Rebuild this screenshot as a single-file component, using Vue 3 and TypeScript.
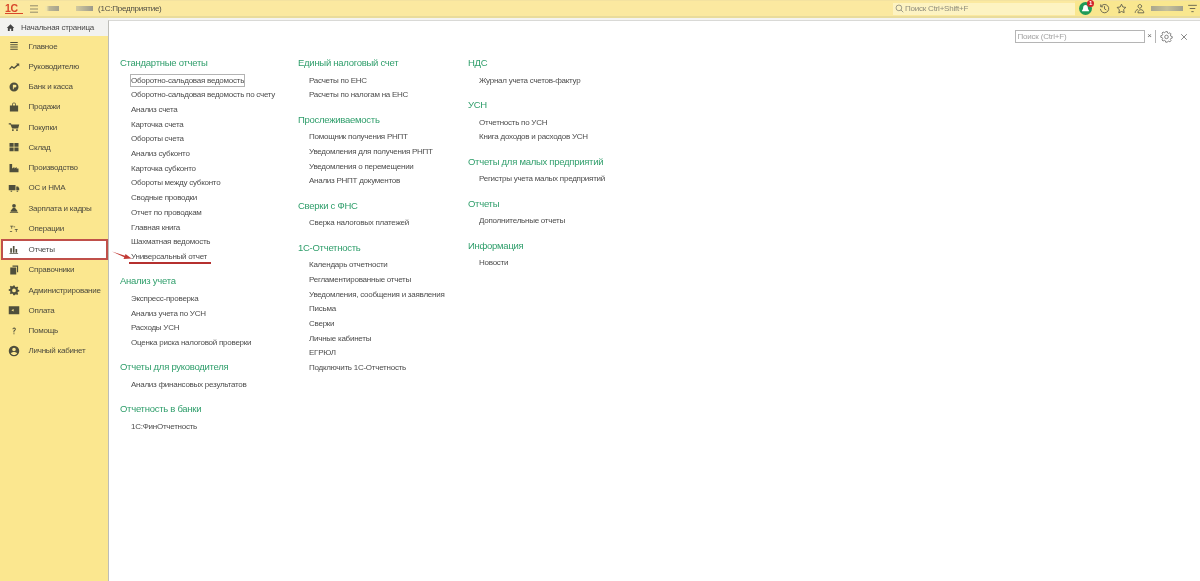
<script setup lang="ts">
interface NavItem { label: string; icon: string; active?: boolean }
interface Group { title: string; links: string[] }

const nav: NavItem[] = [
  { label: 'Главное', icon: 'M3 2.500h10v1.500H3zM3 5.500h10v1.500H3zM3 8.500h10v1.500H3zM3 11.500h10v1.500H3z' },
  { label: 'Руководителю', icon: 'M1.500 11.500L5 7.500l3 2 4-3.500-1.200-1.500H15v4l-1.300-1.300L8 12 5.300 10 2.500 13z' },
  { label: 'Банк и касса', icon: 'M8 2a6 6 0 1 0 0 12A6 6 0 0 0 8 2zM6.500 5H9.500a1.800 1.800 0 0 1 0 3.600H7.700V11H6.500z' },
  { label: 'Продажи', icon: 'M2.500 6h11v8h-11zM5.500 6V4.500a2.500 2.500 0 0 1 5 0V6H9.500V4.500a1.500 1.500 0 0 0-3 0V6z' },
  { label: 'Покупки', icon: 'M1 3h3l.5 1.500h10.500l-1.500 5.500H5.500L3.200 4.500H1zM5.500 11h2v2.200h-2zM11 11h2v2.200h-2z' },
  { label: 'Склад', icon: 'M2 2.500h5.500v5H2zM8.500 2.500H14v5H8.500zM2 8.500h5.500v5H2zM8.500 8.500H14v5H8.500z' },
  { label: 'Производство', icon: 'M2 2.500h3.500v6l3-2v2l3-2v2H14v5H2z' },
  { label: 'ОС и НМА', icon: 'M1 4h9v7H1zM11 6h2.500L15 8.500V11h-4zM3.500 11.500h2v1.500h-2zM11.500 11.500h2v1.500h-2z' },
  { label: 'Зарплата и кадры', icon: 'M8 2.500a2.500 2.500 0 1 1 0 5 2.500 2.500 0 0 1 0-5zM6.500 8h3l3 3.500V13H3.500v-1.500zM2.500 13.500h11V14.500h-11z' },
  { label: 'Операции', icon: 'M3 3.500h4v1H5.500v3h-1v-3H3zM9 8h4v1h-1.500v3h-1V9H9zM2.500 11h3v1h-3zM7.500 4.500h2v1h-2z' },
  { label: 'Отчеты', icon: 'M3 7h2.200v6H3zM6.500 4h2.200v9H6.500zM10 8h2.200v5H10zM2 13.500h11.500v1H2z', active: true },
  { label: 'Справочники', icon: 'M6 2h7.500v9H12V3.500H6zM3 4.500h8V14H3z' },
  { label: 'Администрирование', icon: 'M7 2h2l.4 1.700 1.300.6 1.500-.9 1.400 1.400-.9 1.500.6 1.300 1.700.4v2l-1.700.4-.6 1.300.9 1.500-1.400 1.400-1.500-.9-1.300.6L9 15H7l-.4-1.700-1.300-.6-1.500.9-1.400-1.400.9-1.500-.6-1.300L1 9V7l1.700-.4.6-1.300-.9-1.500 1.400-1.400 1.500.9 1.300-.6zM8 6a2.500 2.500 0 1 0 0 5 2.500 2.500 0 0 0 0-5z' },
  { label: 'Оплата', icon: 'M1 3h14v10.500H1zM7.500 6.500v3.500L4.500 8.200z' },
  { label: 'Помощь', icon: 'M6 5.500a2.200 2.200 0 1 1 3.300 2L8.500 8.200V10h-1.200V7.600l1.200-1a1 1 0 1 0-1.400-1.100zM7.300 11h1.300v1.400H7.300z' },
  { label: 'Личный кабинет', icon: 'M8 1a7 7 0 1 0 0 14A7 7 0 0 0 8 1zM8 3.500a2.400 2.400 0 1 1 0 4.800 2.400 2.400 0 0 1 0-4.800zM8 13.400c-1.800 0-3.300-.8-4.200-2 .6-1.300 2.200-2 4.200-2s3.600.7 4.200 2c-.9 1.200-2.400 2-4.200 2z' },
]

const columns: Group[][] = [
  [
    { title: 'Стандартные отчеты', links: ['Оборотно-сальдовая ведомость', 'Оборотно-сальдовая ведомость по счету', 'Анализ счета', 'Карточка счета', 'Обороты счета', 'Анализ субконто', 'Карточка субконто', 'Обороты между субконто', 'Сводные проводки', 'Отчет по проводкам', 'Главная книга', 'Шахматная ведомость', 'Универсальный отчет'] },
    { title: 'Анализ учета', links: ['Экспресс-проверка', 'Анализ учета по УСН', 'Расходы УСН', 'Оценка риска налоговой проверки'] },
    { title: 'Отчеты для руководителя', links: ['Анализ финансовых результатов'] },
    { title: 'Отчетность в банки', links: ['1С:ФинОтчетность'] },
  ],
  [
    { title: 'Единый налоговый счет', links: ['Расчеты по ЕНС', 'Расчеты по налогам на ЕНС'] },
    { title: 'Прослеживаемость', links: ['Помощник получения РНПТ', 'Уведомления для получения РНПТ', 'Уведомления о перемещении', 'Анализ РНПТ документов'] },
    { title: 'Сверки с ФНС', links: ['Сверка налоговых платежей'] },
    { title: '1С-Отчетность', links: ['Календарь отчетности', 'Регламентированные отчеты', 'Уведомления, сообщения и заявления', 'Письма', 'Сверки', 'Личные кабинеты', 'ЕГРЮЛ', 'Подключить 1С-Отчетность'] },
  ],
  [
    { title: 'НДС', links: ['Журнал учета счетов-фактур'] },
    { title: 'УСН', links: ['Отчетность по УСН', 'Книга доходов и расходов УСН'] },
    { title: 'Отчеты для малых предприятий', links: ['Регистры учета малых предприятий'] },
    { title: 'Отчеты', links: ['Дополнительные отчеты'] },
    { title: 'Информация', links: ['Новости'] },
  ],
]
</script>

<template>
  <div class="app">
    <header class="topbar">
      <span class="logo">1С</span>
      <svg class="burger" viewBox="0 0 12 10"><path d="M1 1h10M1 5h10M1 9h10" /></svg>
      <span class="smear smear-a"></span>
      <span class="smear smear-b"></span>
      <span class="app-title">(1С:Предприятие)</span>
      <div class="global-search">
        <svg class="glass" viewBox="0 0 12 12"><circle cx="5.200" cy="5.200" r="3.800" /><path d="M8 8l3 3" /></svg>
        <span>Поиск Ctrl+Shift+F</span>
      </div>
      <div class="tools">
        <span class="bell">
          <svg viewBox="0 0 14 14"><path d="M7 2.500c2 0 3 1.500 3 3.500 0 2 1 3 1.500 3.500v1h-9v-1C3 9 4 8 4 6c0-2 1-3.500 3-3.500z" /></svg>
          <span class="badge">1</span>
        </span>
        <svg class="tool" viewBox="0 0 14 14"><path d="M2.500 4.500A5.300 5.300 0 1 1 1.800 7.500M2.200 1.800v3h3M7 4v3.500l2.300 1.300" /></svg>
        <svg class="tool" viewBox="0 0 14 14"><path d="M7 1.500l1.700 3.600 3.800.5-2.800 2.700.7 3.900L7 10.800l-3.400 1.900.7-3.900L1.500 5.600l3.800-.5z" /></svg>
        <svg class="tool" viewBox="0 0 14 14"><path d="M8.500 2.200a2.300 2.300 0 1 1-3 3.300 2.300 2.300 0 0 1 3-3.300zM1.500 12.500c0-2.500 1.800-4 3.500-4.200M12.500 12.500H5c0-2.500 1.800-4 3.700-4s3.800 1.500 3.800 4z" /></svg>
        <span class="smear smear-user"></span>
        <svg class="tool menu-tool" viewBox="0 0 14 14"><path d="M1.500 3h11M3.500 7h7M5.500 11h3" /></svg>
      </div>
    </header>

    <div class="body">
      <aside class="sidebar">
        <div class="home-tab">
          <svg class="home-icon" viewBox="0 0 12 12"><path d="M6 1.500L11 6.500H9.500V10.500H7V7.500H5V10.500H2.500V6.500H1z" /></svg>
          <span>Начальная страница</span>
        </div>
        <nav class="nav">
          <a v-for="item in nav" :key="item.label" class="nav-item" :class="{ active: item.active }">
            <svg class="nav-icon" viewBox="0 0 16 16"><path :d="item.icon" fill-rule="evenodd" /></svg>
            <span>{{ item.label }}</span>
          </a>
        </nav>
      </aside>

      <main class="main">
        <div class="tab-strip"></div>
        <section class="panel">
          <div class="panel-tools">
            <div class="page-search">
              <span class="page-search-input">Поиск (Ctrl+F)</span>
              <span class="page-search-clear">×</span>
            </div>
            <svg class="gear" viewBox="0 0 16 16"><path d="M7 2h2l.4 1.700 1.300.6 1.500-.9 1.400 1.400-.9 1.500.6 1.300 1.700.4v2l-1.700.4-.6 1.300.9 1.500-1.400 1.400-1.500-.9-1.300.6L9 15H7l-.4-1.700-1.300-.6-1.500.9-1.400-1.400.9-1.500-.6-1.300L1 9V7l1.700-.4.6-1.300-.9-1.500 1.400-1.400 1.500.9 1.300-.6z" /><circle cx="8" cy="8.500" r="2.200" /></svg>
            <svg class="close" viewBox="0 0 10 10"><path d="M1.500 1.500l7 7M8.500 1.500l-7 7" /></svg>
          </div>
          <div class="columns">
            <div v-for="(col, i) in columns" :key="i" class="column" :class="'column-' + i">
              <div v-for="group in col" :key="group.title" class="group">
                <h3>{{ group.title }}</h3>
                <a v-for="link in group.links" :key="link" class="link" :class="{ focused: link === 'Оборотно-сальдовая ведомость', marked: link === 'Универсальный отчет' }">
                  <span>{{ link }}</span>
                  <svg v-if="link === 'Универсальный отчет'" class="arrow" viewBox="0 0 20 9"><path d="M0 .5L13 4.700 13.500 3 19.500 7.500 11.500 8 12.300 6.300z" /></svg>
                </a>
              </div>
            </div>
          </div>
        </section>
      </main>
    </div>
  </div>
</template>

<style scoped>
.app {
  width: 1200px;
  height: 581px;
  display: flex;
  flex-direction: column;
  overflow: hidden;
  background: #fff;
  font-family: "Liberation Sans", Arial, sans-serif;
  color: #4f4f4f;
  filter: blur(0.3px);
}
.topbar {
  height: 18px;
  flex: none;
  box-sizing: border-box;
  display: flex;
  align-items: center;
  background: #fbe9a0;
  border-top: 1px solid #f3e2a0;
  border-bottom: 2px solid #e9dc9c;
  padding-left: 5px;
  font-size: 8px;
  letter-spacing: -0.22px;
}
.logo {
  width: 18px;
  color: #d9482b;
  font-weight: 700;
  font-size: 10.500px;
  letter-spacing: -0.3px;
  border-bottom: 1px solid #d9482b;
  line-height: 10px;
}
.burger {
  width: 10px;
  height: 8px;
  margin-left: 6px;
  fill: none;
  stroke: #77745f;
  stroke-width: 1;
}
.smear {
  display: block;
  height: 5px;
  background: #aaa68b;
}
.smear-a {
  width: 14px;
  margin-left: 6px;
  background: linear-gradient(90deg, #f4e7a8 10%, #bdb795 30%, #a5a28d 100%);
}
.smear-b {
  width: 17px;
  margin-left: 17px;
  background: linear-gradient(90deg, #d2caa0, #9c9a8c);
}
.app-title {
  margin-left: 5px;
  color: #4f4d44;
}
.global-search {
  margin-left: auto;
  width: 182px;
  height: 12px;
  display: flex;
  align-items: center;
  gap: 1px;
  padding-left: 2px;
  box-sizing: border-box;
  background: #fdf3c2;
  color: #8f8d7c;
}
.glass {
  width: 9px;
  height: 9px;
  fill: none;
  stroke: #7f7f74;
  stroke-width: 1;
}
.tools {
  display: flex;
  align-items: center;
  height: 15px;
  width: 125px;
  background: #f9e78f;
  position: relative;
}
.bell {
  position: relative;
  width: 13px;
  height: 13px;
  margin-left: 4px;
  border-radius: 50%;
  background: #1f9a57;
  display: flex;
  align-items: center;
  justify-content: center;
}
.bell svg {
  width: 11px;
  height: 11px;
  fill: #fff;
}
.badge {
  position: absolute;
  top: -2px;
  right: -2px;
  width: 7px;
  height: 7px;
  border-radius: 50%;
  background: #d3232a;
  color: #fff;
  font-size: 6px;
  font-weight: 700;
  line-height: 7px;
  text-align: center;
}
.tool {
  width: 11px;
  height: 11px;
  margin-left: 6.500px;
  fill: none;
  stroke: #5b5a4b;
  stroke-width: 1.100;
}
.smear-user {
  width: 32px;
  margin-left: 6.500px;
  background: linear-gradient(90deg, #a9a68d, #c5c09b 50%, #a3a18d);
}
.tool.menu-tool {
  margin-left: 3.500px;
}
.body {
  flex: 1;
  display: flex;
  min-height: 0;
}
.sidebar {
  width: 108px;
  flex: none;
  display: flex;
  flex-direction: column;
  background: #fbe78f;
}
.home-tab {
  height: 18px;
  display: flex;
  align-items: center;
  flex: none;
  background: #f2f2f0;
  font-size: 8px;
  letter-spacing: -0.25px;
  color: #4a4a4a;
}
.home-icon {
  width: 9px;
  height: 9px;
  margin: 0 6px 0 6px;
  fill: #444;
}
.nav {
  display: flex;
  flex-direction: column;
}
.nav-item {
  height: 20.270px;
  flex: none;
  box-sizing: border-box;
  display: flex;
  align-items: center;
  font-size: 8px;
  letter-spacing: -0.24px;
  color: #4c4a3e;
}
.nav-icon {
  width: 12px;
  height: 12px;
  margin: 0 8.500px 0 8px;
  fill: #4f4f3c;
}
.nav-item.active {
  background: #fff;
  border: 2px solid #c0504a;
  margin-left: 1px;
  margin-right: 0;
  width: 107px;
  height: 21px;
  color: #4a4a4a;
}
.nav-item.active .nav-icon {
  margin-left: 5px;
}
.main {
  flex: 1;
  min-width: 0;
  display: flex;
  flex-direction: column;
}
.tab-strip {
  height: 2px;
  flex: none;
  background: #f4f4f2;
}
.panel {
  flex: 1;
  position: relative;
  box-sizing: border-box;
  background: #fff;
  border-left: 1px solid #bdbdb8;
  border-top: 1px solid #d9d9d6;
  padding: 35px 0 0 11px;
}
.panel-tools {
  position: absolute;
  top: 9px;
  right: 12px;
  display: flex;
  align-items: center;
}
.page-search {
  display: flex;
  align-items: center;
  height: 13px;
}
.page-search-input {
  width: 130px;
  height: 13px;
  box-sizing: border-box;
  border: 1px solid #b5b5b5;
  color: #a3a3a3;
  font-size: 8px;
  letter-spacing: -0.2px;
  line-height: 11px;
  padding-left: 2px;
}
.page-search-clear {
  width: 11px;
  height: 13px;
  box-sizing: border-box;
  border-right: 1px solid #b5b5b5;
  text-align: center;
  color: #666;
  font-size: 8px;
  line-height: 12px;
}
.gear {
  width: 13px;
  height: 13px;
  margin-left: 4.500px;
  fill: none;
  stroke: #777;
  stroke-width: 1.100;
}
.close {
  width: 8px;
  height: 8px;
  margin-left: 7px;
  fill: none;
  stroke: #777;
  stroke-width: 1.100;
}
.columns {
  display: flex;
}
.column-0 {
  width: 178px;
}
.column-1 {
  width: 170px;
}
.group {
  margin-bottom: 9.650px;
}
h3 {
  margin: 0 0 3.650px;
  height: 14px;
  font-size: 9.500px;
  letter-spacing: -0.27px;
  font-weight: 400;
  line-height: 13px;
  color: #2f9e6b;
  white-space: nowrap;
}
.link {
  position: relative;
  display: block;
  height: 14.700px;
  margin-left: 11px;
  font-size: 8px;
  letter-spacing: -0.25px;
  line-height: 14.700px;
  color: #4d4d4d;
  white-space: nowrap;
}
.link.focused span {
  outline: 1px solid #b3b3b3;
  outline-offset: 0;
  padding: 1px 0;
}
.link.marked::after {
  content: "";
  position: absolute;
  left: -2px;
  top: 12.500px;
  width: 82px;
  height: 2px;
  background: #b5302f;
}
.arrow {
  position: absolute;
  left: -19px;
  top: 1px;
  width: 20px;
  height: 9px;
  fill: #c23a35;
}
</style>

<style>
html, body {
  margin: 0;
  background: #fff;
}
</style>
